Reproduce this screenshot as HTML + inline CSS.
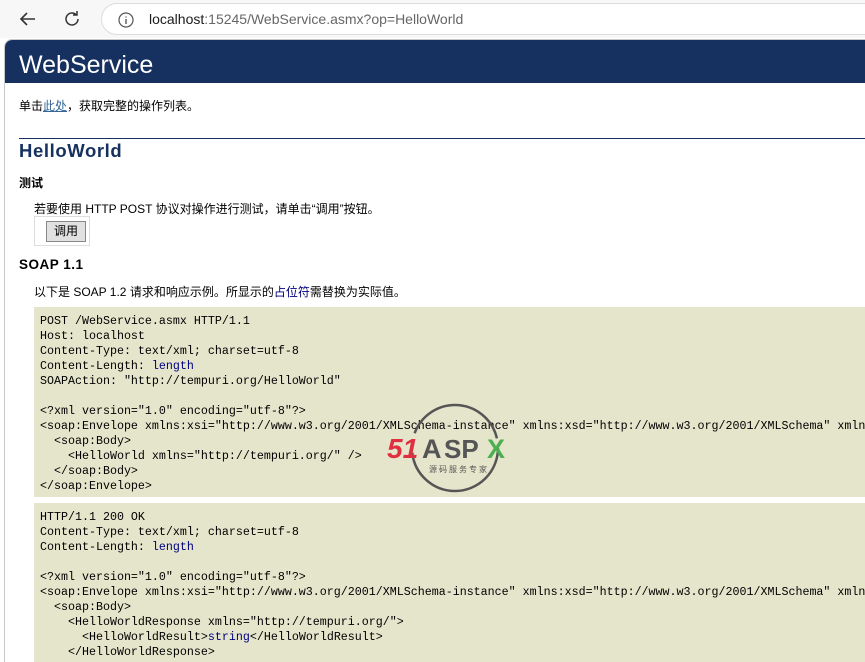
<!DOCTYPE html>
<html><head><meta charset="utf-8">
<style>
*{margin:0;padding:0;box-sizing:border-box}
html,body{width:865px;height:662px;overflow:hidden;background:#fff}
body{font-family:"Liberation Sans","Noto Sans CJK SC",sans-serif;color:#000;position:relative}
.bar{position:absolute;left:0;top:0;width:865px;height:38px;background:#f7f7f7}
.url{position:absolute;left:101px;top:3px;width:790px;height:32px;border:1px solid #dcdcdc;border-radius:16px;background:#fff;font-size:14px;line-height:30px;padding-left:47px;color:#666}
.url b{font-weight:normal;color:#1a1a1a}
.page{position:absolute;left:4px;top:39px;width:861px;height:623px;border-left:1px solid #c8c8c8;border-top:1px solid #c8c8c8;border-top-left-radius:8px;overflow:hidden}
.hd{height:43px;background:#163060;color:#fff;font-size:25px;padding-left:14px;line-height:50px;border-top-left-radius:7px}
.t{position:absolute;font-size:12px;white-space:nowrap}
a{color:#336699}
pre{position:absolute;left:34px;width:840px;background:#e5e5cc;font-family:"Liberation Mono",monospace;font-size:11.67px;line-height:15px;padding:7px 0 0 6px;color:#000;white-space:pre;overflow:hidden}
pre i{font-style:normal;color:#000080}
</style></head><body>
<div class="bar">
<svg style="position:absolute;left:18px;top:9px" width="20" height="20" viewBox="0 0 20 20"><path d="M17 10H3M9 4L3 10l6 6" fill="none" stroke="#333" stroke-width="1.6"/></svg>
<svg style="position:absolute;left:62px;top:9px" width="20" height="20" viewBox="0 0 20 20"><path d="M16 10a6 6 0 1 1-2-4.5M15 2v4h-4" fill="none" stroke="#333" stroke-width="1.5"/></svg>
<div class="url"><svg style="position:absolute;left:16px;top:8px" width="16" height="16" viewBox="0 0 16 16"><circle cx="8" cy="8" r="7" fill="none" stroke="#555" stroke-width="1.2"/><path d="M8 7v5M8 4.5v1" stroke="#555" stroke-width="1.4"/></svg><b>localhost</b>:15245/WebService.asmx?op=HelloWorld</div>
</div>
<div class="page">
<div class="hd">WebService</div>
</div>
<div class="t" style="left:19px;top:97px">单击<a href="#">此处</a>，获取完整的操作列表。</div>
<div style="position:absolute;left:19px;top:138px;width:846px;border-top:1px solid #163060"></div>
<div class="t" style="left:19px;top:140px;font-size:18.5px;font-weight:bold;color:#163060;letter-spacing:0.6px">HelloWorld</div>
<div class="t" style="left:19px;top:174px;font-weight:bold">测试</div>
<div class="t" style="left:34px;top:200px">若要使用 HTTP POST 协议对操作进行测试，请单击“调用”按钮。</div>
<div style="position:absolute;left:34px;top:216px;width:56px;height:30px;border:1px solid #ddd"></div>
<div class="t" style="left:46px;top:221px;width:40px;height:21px;background:#e1e1e1;border:1px solid #888;text-align:center;line-height:19px">调用</div>
<div class="t" style="left:19px;top:257px;font-weight:bold;font-size:13.5px;letter-spacing:0.5px">SOAP 1.1</div>
<div class="t" style="left:34px;top:283px">以下是 SOAP 1.2 请求和响应示例。所显示的<span style="color:#000080">占位符</span>需替换为实际值。</div>
<pre style="top:307px;height:190px">POST /WebService.asmx HTTP/1.1
Host: localhost
Content-Type: text/xml; charset=utf-8
Content-Length: <i>length</i>
SOAPAction: "http://tempuri.org/HelloWorld"

&lt;?xml version="1.0" encoding="utf-8"?&gt;
&lt;soap:Envelope xmlns:xsi="http://www.w3.org/2001/XMLSchema-instance" xmlns:xsd="http://www.w3.org/2001/XMLSchema" xmlns:soap
  &lt;soap:Body&gt;
    &lt;HelloWorld xmlns="http://tempuri.org/" /&gt;
  &lt;/soap:Body&gt;
&lt;/soap:Envelope&gt;</pre>
<pre style="top:503px;height:170px">HTTP/1.1 200 OK
Content-Type: text/xml; charset=utf-8
Content-Length: <i>length</i>

&lt;?xml version="1.0" encoding="utf-8"?&gt;
&lt;soap:Envelope xmlns:xsi="http://www.w3.org/2001/XMLSchema-instance" xmlns:xsd="http://www.w3.org/2001/XMLSchema" xmlns:soap
  &lt;soap:Body&gt;
    &lt;HelloWorldResponse xmlns="http://tempuri.org/"&gt;
      &lt;HelloWorldResult&gt;<i>string</i>&lt;/HelloWorldResult&gt;
    &lt;/HelloWorldResponse&gt;</pre>
<svg style="position:absolute;left:385px;top:400px" width="140" height="100" viewBox="0 0 140 100">
<circle cx="70" cy="48" r="43" fill="none" stroke="#555" stroke-width="2.5" stroke-dasharray="130 20 110 20"/>
<text x="2" y="58" font-family="Liberation Sans,sans-serif" font-weight="bold" font-style="italic" font-size="28" fill="#e03040">51</text>
<text x="37" y="58" font-family="Liberation Sans,sans-serif" font-weight="bold" font-size="27" fill="#555">A</text>
<text x="59" y="58" font-family="Liberation Sans,sans-serif" font-weight="bold" font-size="26" fill="#555">SP</text>
<text x="102" y="58" font-family="Liberation Sans,sans-serif" font-weight="bold" font-size="27" fill="#4caf50">X</text>
<text x="44" y="72" font-family="Noto Sans CJK SC,sans-serif" font-size="8" fill="#555" letter-spacing="2">源码服务专家</text>
</svg>
</body></html>
